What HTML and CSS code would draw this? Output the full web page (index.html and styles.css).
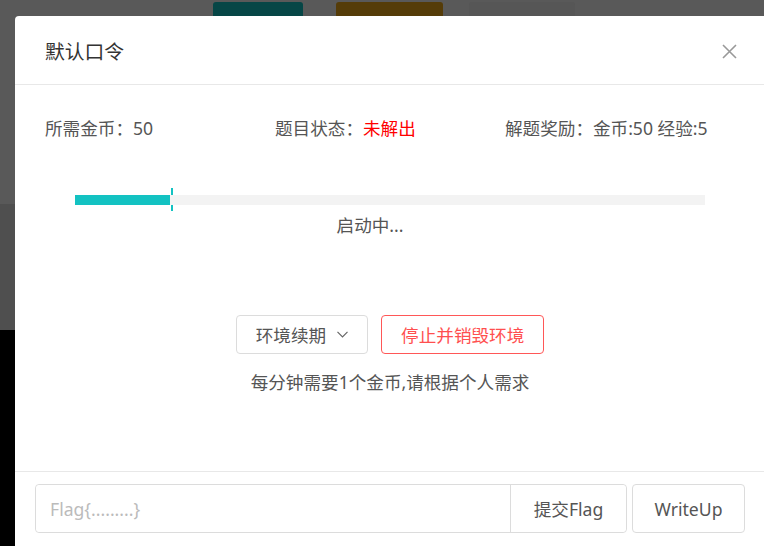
FILE: index.html
```html
<!DOCTYPE html>
<html lang="zh-CN">

<head>
    <meta charset="UTF-8">
    <meta name="viewport" content="width=device-width, initial-scale=1.0">
    <title>默认口令</title>
    <link rel="stylesheet" href="styles.css">
</head>

<body>
    <!-- page behind the mask -->
    <div class="page">
        <div class="toolbar">
            <span class="tool tool-teal"></span>
            <span class="tool tool-brown"></span>
            <span class="tool tool-grey"></span>
        </div>
        <div class="panel"></div>
    </div>

    <!-- dialog -->
    <div class="modal">
        <div class="modal-header">
            <span class="modal-title">默认口令</span>
            <svg class="modal-close" width="15" height="15" viewBox="0 0 15 15">
                <path d="M1 1 L14 14 M14 1 L1 14" stroke="#999" stroke-width="1.6" fill="none" />
            </svg>
        </div>

        <div class="modal-body">
            <div class="info-row">
                <span>所需金币：50</span>
                <span>题目状态：<em class="unsolved">未解出</em></span>
                <span class="info-reward">解题奖励：金币:50 经验:5</span>
            </div>

            <div class="progress">
                <div class="progress-track">
                    <div class="progress-fill" style="width: 15%"></div>
                </div>
                <span class="progress-tick" style="left: 15.2%"></span>
            </div>
            <div class="status">启动中...</div>

            <div class="actions">
                <button class="btn">环境续期
                    <svg width="11" height="7" viewBox="0 0 11 7">
                        <path d="M0.5 0.8 L5.5 5.8 L10.5 0.8" stroke="#666" stroke-width="1.2" fill="none" />
                    </svg>
                </button>
                <button class="btn btn-danger">停止并销毁环境</button>
            </div>
            <p class="note">每分钟需要1个金币,请根据个人需求</p>
        </div>

        <div class="modal-footer">
            <div class="flag-group">
                <input type="text" class="flag-input" placeholder="Flag{.........}">
                <button class="flag-submit">提交Flag</button>
            </div>
            <button class="btn-writeup">WriteUp</button>
        </div>
    </div>
</body>

</html>
```

FILE: styles.css
```css
 body {
     margin: 0;
     height: 100vh;
     overflow: hidden;
     position: relative;
     background-color: #000;
     font-family: "Noto Sans", "Noto Sans CJK SC", sans-serif;
 }

 /* Page behind the mask */
 .toolbar {
     height: 204px;
     background-color: #595959;
     display: flex;
     align-items: flex-start;
 }

 .tool {
     display: block;
     height: 40px;
     margin-top: 2px;
     border-radius: 3px;
 }

 .tool-teal {
     width: 90px;
     margin-left: 213px;
     background-color: #064646;
 }

 .tool-brown {
     width: 107px;
     margin-left: 33px;
     background-color: #553c08;
 }

 .tool-grey {
     width: 106px;
     margin-left: 26px;
     background-color: #565656;
 }

 .panel {
     height: 126px;
     background-color: #4f4f4f;
 }

 /* Modal */
 .modal {
     position: absolute;
     left: 15px;
     top: 16px;
     width: 760px;
     bottom: -20px;
     background-color: #fff;
     border-radius: 4px;
     color: #555;
     font-size: 17.6px;
 }

 .modal-header {
     height: 68px;
     display: flex;
     align-items: center;
     justify-content: space-between;
     padding: 0 38px 0 30px;
     border-bottom: 1px solid #e8e8e8;
 }

 .modal-title {
     font-size: 19.8px;
     color: #333;
     font-family: "Noto Sans CJK SC", sans-serif;
 }

 .modal-close {
     display: block;
     margin-top: 2px;
 }

 .modal-body {
     height: 386px;
     box-sizing: border-box;
     padding: 31px 0 0 30px;
     width: 720px;
     line-height: 24px;
 }

 .info-row {
     display: grid;
     grid-template-columns: 230px 230px 1fr;
     width: 660px;
     white-space: nowrap;
 }

 .info-reward {
     justify-self: end;
 }

 .unsolved {
     font-style: normal;
     color: #f00;
 }

 /* Progress */
 .progress {
     position: relative;
     margin: 55px 0 0 30px;
     width: 630px;
     height: 10px;
 }

 .progress-track {
     position: relative;
     z-index: 1;
     height: 10px;
     background-color: #f3f3f3;
 }

 .progress-fill {
     height: 100%;
     background-color: #13c2c2;
 }

 .progress-tick {
     position: absolute;
     top: -7px;
     width: 2px;
     height: 23px;
     background-color: #13c2c2;
 }

 .status {
     margin-top: 8px;
     text-align: center;
     width: 650px;
 }

 /* Buttons */
 .actions {
     margin-top: 78px;
     display: flex;
     justify-content: center;
     gap: 13px;
 }

 .btn {
     height: 39px;
     padding: 0 19px;
     font-family: inherit;
     font-size: 17.6px;
     color: #555;
     background-color: #fff;
     border: 1px solid #dcdcdc;
     border-radius: 4px;
     display: flex;
     align-items: center;
     gap: 11px;
     cursor: pointer;
 }

 .btn-danger {
     color: #ff4f4f;
     border-color: #ff5757;
 }

 .note {
     margin: 16px 0 0;
     text-align: center;
 }

 /* Footer */
 .modal-footer {
     border-top: 1px solid #e8e8e8;
     padding: 12px 20px;
     display: flex;
     gap: 5px;
 }

 .flag-group {
     display: flex;
     height: 49px;
     border: 1px solid #dcdcdc;
     border-radius: 4px;
     box-sizing: border-box;
 }

 .flag-input {
     width: 475px;
     border: none;
     border-right: 1px solid #dcdcdc;
     border-radius: 4px 0 0 4px;
     padding: 0 14px;
     box-sizing: border-box;
     font-family: inherit;
     font-size: 17.6px;
     color: #555;
     outline: none;
 }

 .flag-input::placeholder {
     color: #bbb;
 }

 .flag-submit,
 .btn-writeup {
     background-color: #fff;
     font-family: inherit;
     font-size: 17.6px;
     color: #555;
     cursor: pointer;
 }

 .flag-submit {
     width: 115px;
     border: none;
     border-radius: 0 4px 4px 0;
 }

 .btn-writeup {
     width: 113px;
     height: 49px;
     border: 1px solid #dcdcdc;
     border-radius: 4px;
 }
```
